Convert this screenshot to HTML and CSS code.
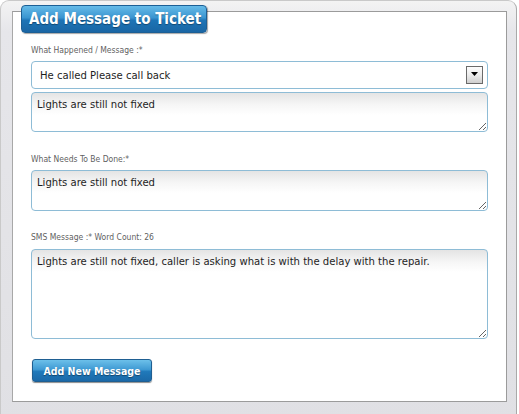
FILE: index.html
```html
<!DOCTYPE html>
<html>
<head>
<meta charset="utf-8">
<link rel="stylesheet" href="styles.css">
</head>
<body>
<div class="frame">
  <div class="panel">
    <div class="badge">Add Message to Ticket</div>
    <label class="lbl lbl1">What Happened / Message :*</label>
    <div class="select">
      <span class="sel-text">He called Please call back</span>
      <span class="sel-btn"><svg width="7" height="4" viewBox="0 0 7 4"><path d="M0 0h7L3.5 4z" fill="#000"/></svg></span>
    </div>
    <textarea class="ta ta1">Lights are still not fixed</textarea>
    <label class="lbl lbl2">What Needs To Be Done:*</label>
    <textarea class="ta ta2">Lights are still not fixed</textarea>
    <label class="lbl lbl3">SMS Message :* Word Count: 26</label>
    <textarea class="ta ta3">Lights are still not fixed, caller is asking what is with the delay with the repair.</textarea>
    <button class="btn">Add New Message</button>
  </div>
</div>
</body>
</html>
```
FILE: styles.css
```css
html, body {
  margin: 0;
  padding: 0;
  background: #fff;
}
body {
  font-family: "DejaVu Sans Condensed", "DejaVu Sans", sans-serif;
  width: 519px;
  height: 414px;
  overflow: hidden;
}
.frame {
  width: 517px;
  height: 430px;
  box-sizing: border-box;
  border: 1px solid #c9c9c9;
  border-right-color: #a9a9a9;
  border-bottom: none;
  border-radius: 9px 9px 0 0;
  padding: 10px 9px 12px 11px;
  background: linear-gradient(to bottom, #f3f3f3 0, #e6e6ea 30px, #e0e0e4 100%);
}
.panel {
  position: relative;
  background: #fff;
  border: 1px solid #9b9b9b;
  border-left-color: #a8a8a8;
  padding: 32px 18px 19px 18px;
  display: flex;
  flex-direction: column;
}
.badge {
  position: absolute;
  left: 8px;
  top: -7px;
  width: 186px;
  height: 28px;
  box-sizing: border-box;
  border-radius: 4px;
  border: 1px solid #1c5f95;
  background: linear-gradient(to bottom, #66bbe8 0, #3a95d0 45%, #1d74b6 55%, #1a66a4 100%);
  box-shadow: 1px 1px 1px rgba(0,0,0,0.35);
  color: #fff;
  font-weight: bold;
  font-size: 15px;
  line-height: 26px;
  padding-left: 7px;
  text-shadow: 0 1px 1px rgba(0,0,0,0.35);
  white-space: nowrap;
}
.lbl {
  display: block;
  font-size: 8.5px;
  line-height: 12px;
  height: 12px;
  color: #5f5f5f;
}
.lbl1 { margin-bottom: 5px; }
.lbl2 { margin-top: 21px; margin-bottom: 5px; }
.lbl3 { margin-top: 20px; margin-bottom: 6px; }
.select {
  height: 28px;
  box-sizing: border-box;
  border: 1px solid #8ebcd6;
  border-radius: 4px;
  background: #fff;
  display: flex;
  align-items: center;
  justify-content: space-between;
  padding: 0 4px 0 8px;
  margin-bottom: 3px;
}
.sel-text {
  font-size: 11.2px;
  color: #1e1e1e;
}
.sel-btn {
  width: 17px;
  height: 18px;
  box-sizing: border-box;
  border: 1px solid #6a6a6a;
  background: linear-gradient(to bottom, #fdfdfd 0, #ececec 50%, #cfcfcf 100%);
  display: flex;
  align-items: center;
  justify-content: center;
  padding-bottom: 2px;
}
.sel-btn svg { display: block; }
.ta {
  display: block;
  width: 100%;
  box-sizing: border-box;
  margin: 0;
  border: 1px solid #8ebcd6;
  border-radius: 4px;
  background: linear-gradient(to bottom, #e4e4e4 0, #f6f6f6 12px, #ffffff 22px);
  font-family: "DejaVu Sans Condensed", "DejaVu Sans", sans-serif;
  font-size: 11.2px;
  line-height: 15px;
  color: #1e1e1e;
  padding: 4px 5px;
  outline: none;
  overflow: hidden;
}
.ta1 { height: 40px; }
.ta2 { height: 41px; }
.ta3 { height: 90px; }
.btn {
  align-self: flex-start;
  margin: 20px 0 0 1px;
  width: 120px;
  height: 23px;
  box-sizing: border-box;
  border: 1px solid #1f5f92;
  border-radius: 3px;
  background: linear-gradient(to bottom, #6cc0ea 0, #3f9ad3 45%, #2079ba 55%, #1b69a8 100%);
  box-shadow: 0 1px 1px rgba(0,0,0,0.45);
  color: #fff;
  font-family: "DejaVu Sans Condensed", "DejaVu Sans", sans-serif;
  font-weight: bold;
  font-size: 10.5px;
  line-height: 20px;
  padding: 0;
  text-shadow: 0 1px 1px rgba(0,0,0,0.4);
}
```
